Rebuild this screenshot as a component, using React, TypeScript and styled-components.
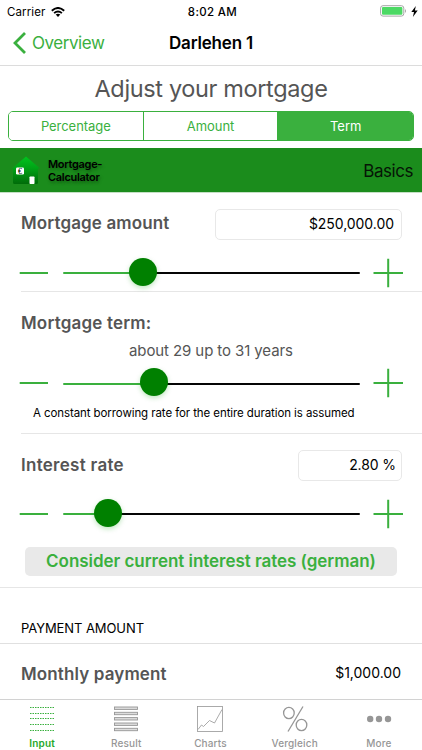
import React from "react";
import styled, { createGlobalStyle } from "styled-components";

const GREEN = "#3ab03e";

const GlobalStyle = createGlobalStyle`
  * { box-sizing: border-box; }
  body {
    margin: 0;
    background: #fff;
    color: #000;
    font-family: Inter, "Liberation Sans", sans-serif;
  }
`;

const Screen = styled.div`
  width: 422px;
  height: 750px;
  display: flex;
  flex-direction: column;
  overflow: hidden;
  background: #fff;
`;

type TextProps = {
  $size: number;
  $weight?: number;
  $color?: string;
  $track?: number;
};

const Label = styled.span<TextProps>`
  font-size: ${(p) => p.$size}px;
  font-weight: ${(p) => p.$weight ?? 400};
  color: ${(p) => p.$color ?? "#000"};
  letter-spacing: ${(p) => p.$track ?? 0}px;
  line-height: 20px;
  white-space: nowrap;
`;

const StatusBar = styled.div`
  height: 20px;
  display: grid;
  grid-template-columns: 1fr auto 1fr;
  align-items: center;
  padding: 2px 4px 0 7px;
`;

const StatusSide = styled.div<{ $end?: boolean }>`
  display: flex;
  align-items: center;
  gap: ${(p) => (p.$end ? "4px" : "6px")};
  padding-bottom: ${(p) => (p.$end ? "2px" : "0")};
  justify-content: ${(p) => (p.$end ? "flex-end" : "flex-start")};
`;

const NavBar = styled.header`
  height: 46px;
  flex: none;
  display: grid;
  grid-template-columns: 1fr auto 1fr;
  align-items: center;
  padding: 1px 13px 0;
  border-bottom: 1px solid #dcdcdc;
`;

const BackButton = styled.button`
  display: flex;
  align-items: center;
  gap: 6px;
  padding: 0;
  border: 0;
  background: none;
  font-family: inherit;
`;

const PageTitle = styled.h1`
  height: 45px;
  flex: none;
  margin: 0;
  padding-top: 1px;
  font-size: 23.5px;
  font-weight: 400;
  line-height: 44px;
  letter-spacing: -0.36px;
  text-align: center;
  color: #555;
`;

const Segments = styled.div`
  height: 30px;
  flex: none;
  margin: 0 8px 7px;
  display: grid;
  grid-template-columns: repeat(3, 1fr);
  border: 1px solid ${GREEN};
  border-radius: 5px;
  overflow: hidden;
`;

const Segment = styled.button<{ $active?: boolean }>`
  border: 0;
  border-right: 1px solid ${GREEN};
  padding: 0;
  font: 400 13px/28px Inter, sans-serif;
  letter-spacing: -0.05px;
  color: ${(p) => (p.$active ? "#fff" : GREEN)};
  background: ${(p) => (p.$active ? GREEN : "#fff")};
  &:last-child { border-right: 0; }
`;

const Banner = styled.div`
  height: 44px;
  flex: none;
  display: flex;
  align-items: center;
  padding: 1px 9px 0 12px;
  background: #1b8c1c;
  box-shadow: 0 1px 0 #c5dfc5;
`;

const BrandName = styled.div`
  margin-left: 8px;
  flex: 1;
  font-size: 11px;
  font-weight: 600;
  line-height: 13px;
  letter-spacing: -0.3px;
  text-shadow: 1px 2px 3px rgba(0, 40, 0, 0.4);
`;

const Section = styled.section<{ $height: number; $full?: boolean }>`
  height: ${(p) => p.$height}px;
  flex: none;
  margin-left: ${(p) => (p.$full ? 0 : 21)}px;
  padding-left: ${(p) => (p.$full ? 21 : 0)}px;
  border-bottom: 1px solid #e6e6e6;
`;

const FieldRow = styled.div<{ $top: number }>`
  display: flex;
  justify-content: space-between;
  padding: ${(p) => p.$top}px 20px 0 0;
  height: ${(p) => p.$top + 31}px;
`;

const Field = styled.div<{ $width: number; $pad: number }>`
  width: ${(p) => p.$width}px;
  height: 31px;
  display: flex;
  justify-content: flex-end;
  border: 1px solid #e8e8e8;
  border-radius: 5px;
  padding: 4px ${(p) => p.$pad}px 0 0;
`;

const Heading = styled.h2<{ $top?: number; $track?: number }>`
  margin: 0;
  padding-top: ${(p) => p.$top ?? 0}px;
  font-size: 17px;
  font-weight: 600;
  line-height: 28px;
  letter-spacing: ${(p) => p.$track ?? 0.13}px;
  color: #555;
`;

const SliderRow = styled.div<{ $top: number }>`
  margin: ${(p) => p.$top}px 0 0 -2px;
  height: 30px;
  display: grid;
  grid-template-columns: 30px 297px 30px;
  column-gap: 13.5px;
  align-items: center;
`;

const Track = styled.div<{ $at: number; $drop: number }>`
  position: relative;
  height: 2px;
  top: ${(p) => p.$drop}px;
  border-radius: 1px;
  background: linear-gradient(to right, ${GREEN} ${(p) => p.$at}px, #050505 ${(p) => p.$at}px);
`;

const Thumb = styled.div<{ $at: number; $lift: number }>`
  position: absolute;
  left: ${(p) => p.$at - 14}px;
  top: ${(p) => -14 - p.$lift}px;
  width: 28px;
  height: 28px;
  border-radius: 50%;
  background: #008000;
  box-shadow: 0 2px 5px rgba(0, 160, 0, 0.25);
`;

const StepIcon = styled.svg`
  display: block;
  width: 30px;
  height: 30px;
`;

const Hint = styled.p<{ $top: number; $left: number }>`
  margin: ${(p) => p.$top}px 0 0 ${(p) => p.$left}px;
  height: 20px;
  display: flex;
`;

const RatesButton = styled.button`
  display: block;
  width: 372px;
  height: 29px;
  margin: 18px 0 0 4px;
  padding: 0;
  border: 0;
  border-radius: 5px;
  background: #e9e9e9;
  font: 600 17px/29px Inter, sans-serif;
  letter-spacing: -0.04px;
  color: ${GREEN};
`;

const GroupHeader = styled.div`
  height: 56px;
  flex: none;
  display: flex;
  padding: 30px 0 0 21px;
  border-bottom: 1px solid #e0e0e0;
`;

const PaymentRow = styled.div`
  height: 55px;
  flex: none;
  display: flex;
  justify-content: space-between;
  padding: 16px 21px 0;
`;

const Amount = styled.div`
  display: flex;
  padding-top: 3px;
`;

const TabBar = styled.nav`
  height: 51px;
  flex: none;
  display: grid;
  grid-template-columns: repeat(5, 84.2px);
  border-top: 1px solid #d2d2d2;
`;

const Tab = styled.div<{ $active?: boolean }>`
  display: flex;
  flex-direction: column;
  align-items: center;
  padding-top: 5px;
  gap: 3px;
  color: ${(p) => (p.$active ? "#24a829" : "#969696")};
  font-size: 10px;
  font-weight: ${(p) => (p.$active ? 600 : 500)};
  line-height: 16px;
  letter-spacing: 0.15px;
  svg { display: block; }
`;

function Slider({ at, top, drop = 0 }: { at: number; top: number; drop?: number }) {
  return (
    <SliderRow $top={top}>
      <StepIcon viewBox="0 0 30 30">
        <path d="M.7 15H29" stroke={GREEN} strokeWidth="2" />
      </StepIcon>
      <Track $at={at} $drop={drop}>
        <Thumb $at={at} $lift={drop} />
      </Track>
      <StepIcon viewBox="0 0 30 30">
        <path d="M.5 15H30M15.2 .7V29.3" stroke={GREEN} strokeWidth="2" />
      </StepIcon>
    </SliderRow>
  );
}

function House() {
  return (
    <svg width="28" height="30" viewBox="0 0 28 30">
      <defs>
        <linearGradient id="wall" x1="0" y1="0" x2="0" y2="1">
          <stop offset="0" stopColor="#00c41e" />
          <stop offset=".4" stopColor="#00a516" />
          <stop offset="1" stopColor="#006b09" />
        </linearGradient>
      </defs>
      <path d="M14 .5 28 12.5H26V26.5Q26 28 24.5 28H2.5Q1 28 1 26.5V12.5H0Z" fill="url(#wall)" />
      <rect x="4" y="11.5" width="8" height="7" rx="1.2" fill="#fff" />
      <text x="8" y="17.6" textAnchor="middle" fontFamily="Liberation Serif, serif" fontSize="8">€</text>
      <rect x="17.5" y="20.5" width="5" height="7.5" rx=".7" fill="#fff" />
    </svg>
  );
}

export default function App() {
  return (
    <Screen>
      <GlobalStyle />
      <StatusBar>
        <StatusSide>
          <Label $size={11.5} $track={0.1}>Carrier</Label>
          <svg width="14" height="10" viewBox="0 0 14 10" fill="none" stroke="#000" strokeWidth="1.9">
            <path d="M.8 3.7Q7-1.8 13.2 3.7M3.1 6.1Q7 2.7 10.9 6.1" />
            <path d="M7 9.9 4.7 7.6Q7 5.8 9.3 7.6Z" fill="#000" stroke="none" />
          </svg>
        </StatusSide>
        <Label $size={11.5} $weight={500} $track={0.35}>8:02 AM</Label>
        <StatusSide $end>
          <svg width="27" height="12" viewBox="0 0 27 12">
            <rect x=".6" y=".7" width="23.2" height="10.4" rx="2.4" fill="#fff" stroke="#a5a5a5" />
            <rect x="2" y="2.1" width="20.4" height="7.6" rx="1" fill="#4cd964" />
            <path d="M25 4Q27 6 25 8Z" fill="#a5a5a5" />
          </svg>
          <svg width="7" height="11" viewBox="0 0 7 11">
            <path d="M4.8 0 .3 6H3L1.9 11 6.7 4.5H3.9Z" />
          </svg>
        </StatusSide>
      </StatusBar>

      <NavBar>
        <BackButton>
          <svg width="13" height="22" viewBox="0 0 13 22">
            <path d="M12 1 2 11l10 10" fill="none" stroke={GREEN} strokeWidth="2.8" />
          </svg>
          <Label $size={17} $color={GREEN} $track={-0.45}>Overview</Label>
        </BackButton>
        <Label $size={17} $weight={600} $track={-0.2}>Darlehen 1</Label>
      </NavBar>

      <PageTitle>Adjust your mortgage</PageTitle>

      <Segments>
        <Segment>Percentage</Segment>
        <Segment>Amount</Segment>
        <Segment $active>Term</Segment>
      </Segments>

      <Banner>
        <House />
        <BrandName>Mortgage-<br />Calculator</BrandName>
        <Label $size={17} $color="#061506" $track={-0.45}>Basics</Label>
      </Banner>

      <Section $height={100}>
        <FieldRow $top={17}>
          <Heading>Mortgage amount</Heading>
          <Field $width={187} $pad={7}>
            <Label $size={14} $track={-0.05}>$250,000.00</Label>
          </Field>
        </FieldRow>
        <Slider at={80.5} top={18} />
      </Section>

      <Section $height={142}>
        <Heading $top={17} $track={0.18}>Mortgage term:</Heading>
        <Hint $top={4} $left={108}>
          <Label $size={15} $color="#555" $track={-0.1}>about 29 up to 31 years</Label>
        </Hint>
        <Slider at={91.5} top={7} drop={1} />
        <Hint $top={5} $left={12}>
          <Label $size={11.5} $track={-0.09}>A constant borrowing rate for the entire duration is assumed</Label>
        </Hint>
      </Section>

      <Section $height={154} $full>
        <FieldRow $top={16}>
          <Heading $top={1} $track={0.28}>Interest rate</Heading>
          <Field $width={104} $pad={5}>
            <Label $size={14} $track={-0.1}>2.80 %</Label>
          </Field>
        </FieldRow>
        <Slider at={45} top={18} />
        <RatesButton>Consider current interest rates (german)</RatesButton>
      </Section>

      <GroupHeader>
        <Label $size={13} $track={-0.08}>PAYMENT AMOUNT</Label>
      </GroupHeader>

      <PaymentRow>
        <Heading>Monthly payment</Heading>
        <Amount>
          <Label $size={14}>$1,000.00</Label>
        </Amount>
      </PaymentRow>

      <TabBar>
        <Tab $active>
          <svg width="26" height="27" viewBox="0 0 26 27">
            <path d="M1 2.5H25M1 8.5H25M1 13.5H25M1 19.5H25M1 25.5H25" stroke={GREEN} strokeWidth="1" strokeDasharray="1.5 1" />
          </svg>
          Input
        </Tab>
        <Tab>
          <svg width="26" height="27" viewBox="0 0 26 27" fill="#ddd" stroke="#969696" strokeWidth=".9">
            {[2, 7.3, 12.6, 18, 23.3].map((y) => (
              <rect key={y} x="1.5" y={y} width="23" height="2.4" />
            ))}
          </svg>
          Result
        </Tab>
        <Tab>
          <svg width="26" height="27" viewBox="0 0 26 27" fill="none" stroke="#969696" strokeWidth=".8">
            <rect x=".5" y="1.5" width="25" height="25" />
            <path d="M1 24.5 4.5 20l2 1.5 6-6 5 2.5L25 4.5" />
          </svg>
          Charts
        </Tab>
        <Tab>
          <svg width="26" height="27" viewBox="0 0 26 27" fill="none" stroke="#969696" strokeWidth="1.3">
            <ellipse cx="6.9" cy="8" rx="5.3" ry="5.6" />
            <ellipse cx="19.5" cy="20" rx="5.3" ry="5.6" />
            <path d="M21 1.5 6 26.5" />
          </svg>
          Vergleich
        </Tab>
        <Tab>
          <svg width="26" height="27" viewBox="0 0 26 27" fill="#969696">
            <circle cx="4.2" cy="14" r="3.2" />
            <circle cx="13" cy="14" r="3.2" />
            <circle cx="22" cy="14" r="3.2" />
          </svg>
          More
        </Tab>
      </TabBar>
    </Screen>
  );
}
